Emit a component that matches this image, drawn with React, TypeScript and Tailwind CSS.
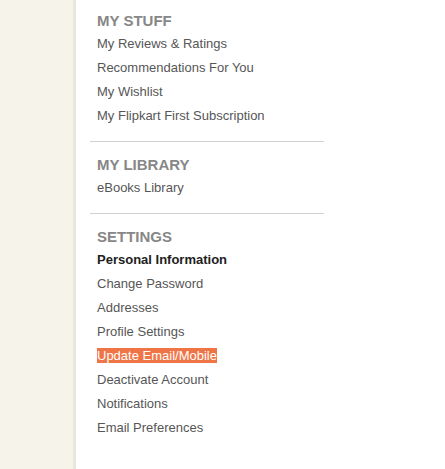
import React from "react";

interface NavSection {
  title: string;
  items: string[];
}

const sections: NavSection[] = [
  {
    title: "My Stuff",
    items: [
      "My Reviews & Ratings",
      "Recommendations For You",
      "My Wishlist",
      "My Flipkart First Subscription",
    ],
  },
  {
    title: "My Library",
    items: ["eBooks Library"],
  },
  {
    title: "Settings",
    items: [
      "Personal Information",
      "Change Password",
      "Addresses",
      "Profile Settings",
      "Update Email/Mobile",
      "Deactivate Account",
      "Notifications",
      "Email Preferences",
    ],
  },
];

const ACTIVE = "Personal Information";
const SELECTED = "Update Email/Mobile";

export default function App() {
  return (
    <div
      className="flex h-[469px] w-[445px] bg-white"
      style={{ fontFamily: '"Liberation Sans", Arial, sans-serif' }}
    >
      {/* Left beige panel */}
      <div className="w-[76px] shrink-0 bg-[#f6f3eb] border-r-[3px] border-[#ebe6da]" />

      {/* Account nav */}
      <div className="pl-[14px]">
        <div className="w-[234px]">
          {sections.map((section, i) => (
            <div
              key={section.title}
              className={`px-[7px] pb-[13px] ${
                i === 0 ? "pt-[9px]" : "pt-[11px] border-t border-[#d0d0d0]"
              }`}
            >
              <h2 className="text-[15px] leading-[23px] font-bold uppercase text-[#878787]">
                {section.title}
              </h2>
              <ul>
                {section.items.map((item) => (
                  <li key={item} className="h-[24px] leading-[24px] text-[13px]">
                    {item === ACTIVE ? (
                      <span className="font-bold text-[#212121]">{item}</span>
                    ) : item === SELECTED ? (
                      <span className="bg-[#ef7546] text-white">{item}</span>
                    ) : (
                      <span className="text-[#565656]">{item}</span>
                    )}
                  </li>
                ))}
              </ul>
            </div>
          ))}
        </div>
      </div>
    </div>
  );
}
